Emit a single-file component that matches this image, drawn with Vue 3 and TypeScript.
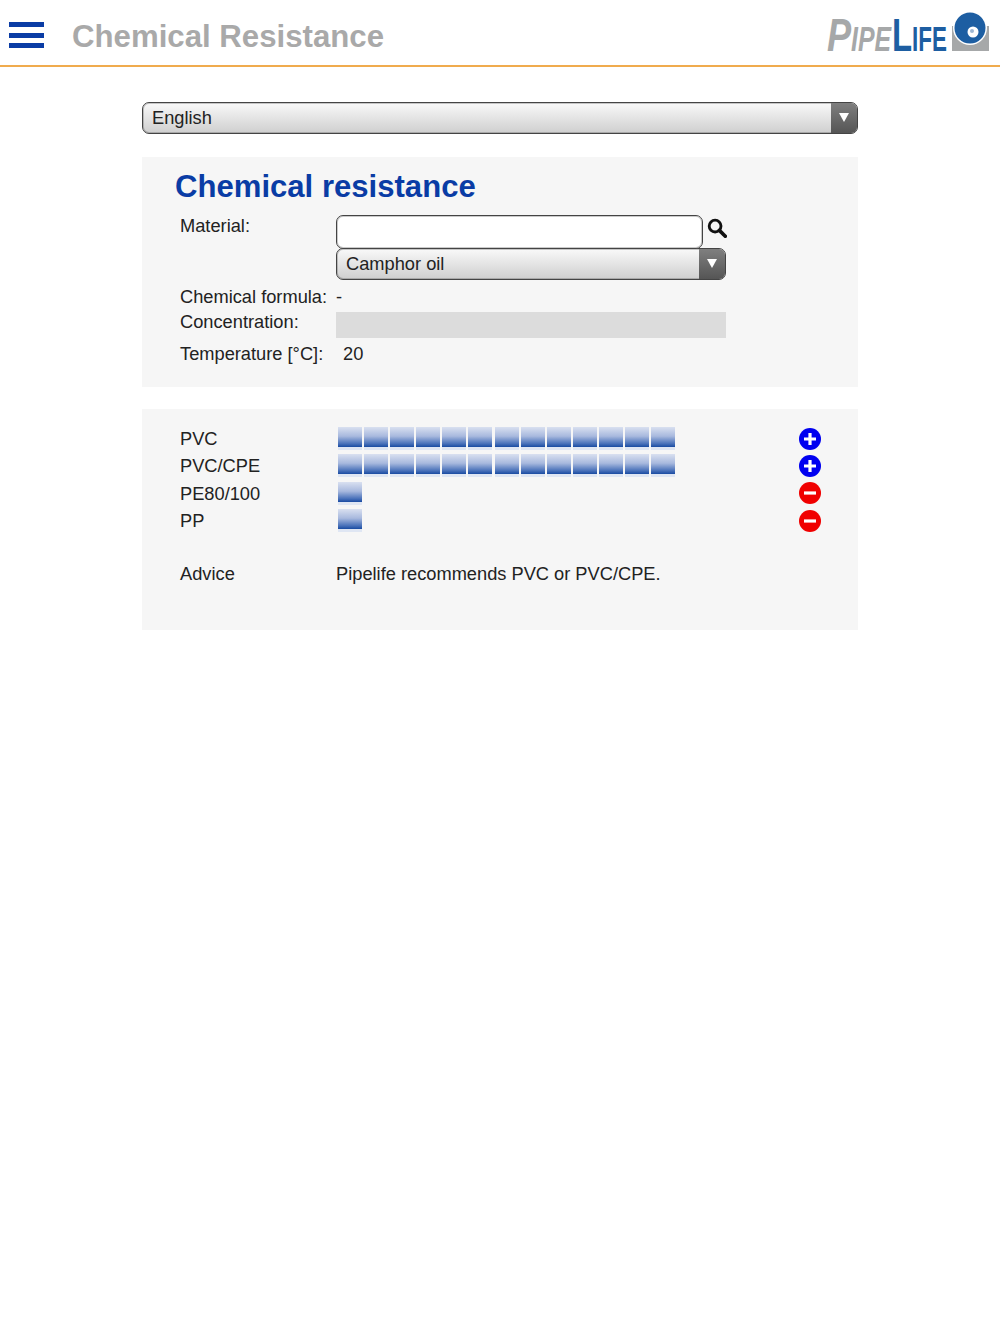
<template>
  <div class="page">
    <header class="app-header">
      <button class="menu-btn" type="button" aria-label="Menu">
        <span></span><span></span><span></span>
      </button>
      <h1 class="app-title">Chemical Resistance</h1>
      <svg class="logo" width="164" height="44" viewBox="0 0 164 44">
        <text transform="translate(1 39) scale(.77 1)" class="logo-pipe big">P</text>
        <text transform="translate(25 39) scale(.71 1)" class="logo-pipe">IPE</text>
        <text transform="translate(66 39) scale(.7 1)" class="logo-life big">L</text>
        <text transform="translate(86 39) scale(.64 1)" class="logo-life">IFE</text>
        <rect x="126" y="14" width="37" height="25" fill="#a6a8a9" />
        <circle cx="144" cy="16" r="17" fill="#fff" />
        <circle cx="144" cy="16" r="15.5" fill="#1d5ea2" />
        <circle cx="147" cy="20" r="5.5" fill="#fff" />
        <circle cx="146" cy="19" r="2" fill="#9fb8d4" />
      </svg>
    </header>

    <main class="content">
      <div class="select-box">
        <span class="select-text">English</span>
        <span class="select-arrow"><i></i></span>
      </div>

      <section class="panel panel-form">
        <h2 class="panel-title">Chemical resistance</h2>
        <div class="row row-material">
          <label>Material:</label>
          <div class="material-fields">
            <div class="search-line">
              <input type="text" class="search-input" />
              <svg class="search-icon" width="20" height="20" viewBox="0 0 21 21">
                <circle cx="8.5" cy="8.5" r="6.2" fill="none" stroke="#111" stroke-width="3" />
                <path d="M13 13 L19.2 19.2" stroke="#111" stroke-width="3.8" stroke-linecap="round" />
              </svg>
            </div>
            <div class="select-box select-material">
              <span class="select-text">Camphor oil</span>
              <span class="select-arrow"><i></i></span>
            </div>
          </div>
        </div>
        <div class="row row-formula">
          <label>Chemical formula:</label>
          <span>-</span>
        </div>
        <div class="row row-conc">
          <label>Concentration:</label>
          <div class="conc-bar"></div>
        </div>
        <div class="row row-temp">
          <label>Temperature [°C]:</label>
          <span class="temp-value">20</span>
        </div>
      </section>

      <section class="panel panel-result">
        <div v-for="item in results" :key="item.name" class="result-row">
          <label>{{ item.name }}</label>
          <div class="cells">
            <span v-for="n in item.level" :key="n" class="cell"></span>
          </div>
          <svg class="result-icon" width="22" height="22" viewBox="0 0 22 22">
            <circle cx="11" cy="11" r="11" :fill="item.ok ? '#0000f0' : '#f00000'" />
            <path v-if="item.ok" d="M11 5 V17 M5 11 H17" stroke="#fff" stroke-width="3.2" />
            <path v-else d="M5 11 H17" stroke="#fff" stroke-width="3.2" />
          </svg>
        </div>
        <div class="row row-advice">
          <label>Advice</label>
          <span>Pipelife recommends PVC or PVC/CPE.</span>
        </div>
      </section>
    </main>
  </div>
</template>

<script setup lang="ts">
interface ResultItem {
  name: string
  level: number
  ok: boolean
}

const results: ResultItem[] = [
  { name: 'PVC', level: 13, ok: true },
  { name: 'PVC/CPE', level: 13, ok: true },
  { name: 'PE80/100', level: 1, ok: false },
  { name: 'PP', level: 1, ok: false }
]
</script>

<style>
html,
body {
  background: #ffffff;
}
</style>

<style scoped>
.page {
  min-height: 1334px;
  background: #fff;
  font-family: "Liberation Sans", Arial, sans-serif;
  font-size: 18.25px;
  color: #222;
}

.app-header {
  display: flex;
  align-items: center;
  height: 65px;
  padding: 0 10px 0 9px;
  border-bottom: 2px solid #f0ab4e;
}

.menu-btn {
  display: flex;
  flex-direction: column;
  gap: 5.5px;
  width: 35px;
  padding: 0;
  margin-top: 5px;
  background: none;
  border: none;
}

.menu-btn span {
  display: block;
  height: 5px;
  background: #0a3ca5;
}

.app-title {
  flex: 1;
  margin: 9px 0 0 28px;
  font-size: 31.2px;
  font-weight: 700;
  color: #a9a9a9;
}

.logo {
  margin-top: 2px;
  overflow: visible;
}

.logo-pipe {
  font-family: "Liberation Sans", Arial, sans-serif;
  font-size: 35px;
  font-style: italic;
  font-weight: 700;
  fill: #a6a8a9;
}

.logo-life {
  font-family: "Liberation Sans", Arial, sans-serif;
  font-size: 35px;
  font-weight: 700;
  fill: #1d5ea2;
}

.logo .big {
  font-size: 47px;
}

.content {
  width: 716px;
  margin: 0 auto;
  padding-top: 35px;
}

.select-box {
  display: flex;
  align-items: stretch;
  box-sizing: border-box;
  height: 32px;
  background: linear-gradient(#f9f9f9, #cfcfcf);
  border: 1px solid #444;
  border-radius: 7px;
  box-shadow: inset 0 0 0 1px rgba(80, 80, 80, 0.3);
  overflow: hidden;
}

.select-text {
  flex: 1;
  padding-left: 9px;
  line-height: 30px;
}

.select-arrow {
  display: flex;
  align-items: center;
  justify-content: center;
  width: 26px;
  background: linear-gradient(#7f7f7f, #555);
}

.select-arrow i {
  width: 0;
  height: 0;
  margin: 0 1px 2px 0;
  border-left: 5px solid transparent;
  border-right: 5px solid transparent;
  border-top: 9px solid #fff;
}

.panel {
  background: #f6f6f6;
}

.panel-form {
  box-sizing: border-box;
  height: 230px;
  margin-top: 23px;
  padding: 11px 0 0 38px;
}

.panel-title {
  margin: 0 0 0 -5px;
  font-size: 31.1px;
  line-height: 37px;
  font-weight: 700;
  color: #0a3ca5;
}

.row {
  display: flex;
}

.row label,
.result-row label {
  flex: none;
  width: 156px;
  white-space: nowrap;
}

.row-material {
  margin-top: 10px;
}

.row-material label {
  line-height: 22px;
}

.material-fields {
  width: 390px;
}

.search-line {
  display: flex;
  align-items: flex-start;
}

.search-input {
  flex: none;
  box-sizing: border-box;
  width: 367px;
  height: 34px;
  background: #fff;
  border: 1px solid #444;
  border-radius: 7px;
  box-shadow: inset 0 0 0 1px rgba(80, 80, 80, 0.3);
  outline: none;
}

.search-icon {
  flex: none;
  margin: 3px 0 0 4px;
}

.select-material {
  margin-top: -1px;
}

.row-formula {
  margin-top: 6px;
  line-height: 22px;
}

.row-conc {
  margin-top: 4px;
  align-items: center;
  height: 26px;
}

.row-conc label {
  margin-top: -6px;
}

.conc-bar {
  width: 390px;
  height: 26px;
  margin-top: -1px;
  background: #dcdcdc;
}

.row-temp {
  margin-top: 5px;
  line-height: 22px;
}

.temp-value {
  margin-left: 7px;
}

.panel-result {
  box-sizing: border-box;
  height: 221px;
  margin-top: 22px;
  padding: 16px 37px 0 38px;
}

.result-row {
  display: flex;
  align-items: center;
  height: 27.3px;
}

.result-row label {
  padding-top: 1px;
}

.cells {
  flex: 1;
  display: flex;
  gap: 2.1px;
  padding-left: 2px;
}

.cell {
  width: 24px;
  height: 23px;
  background: linear-gradient(#d9e0f0 0%, #a8b9de 40%, #4a72ba 72%, #1c4da3 86%, #dfe6f3 87%, #dfe6f3 100%);
}

.row-advice {
  margin-top: 29px;
  line-height: 22px;
}
</style>
